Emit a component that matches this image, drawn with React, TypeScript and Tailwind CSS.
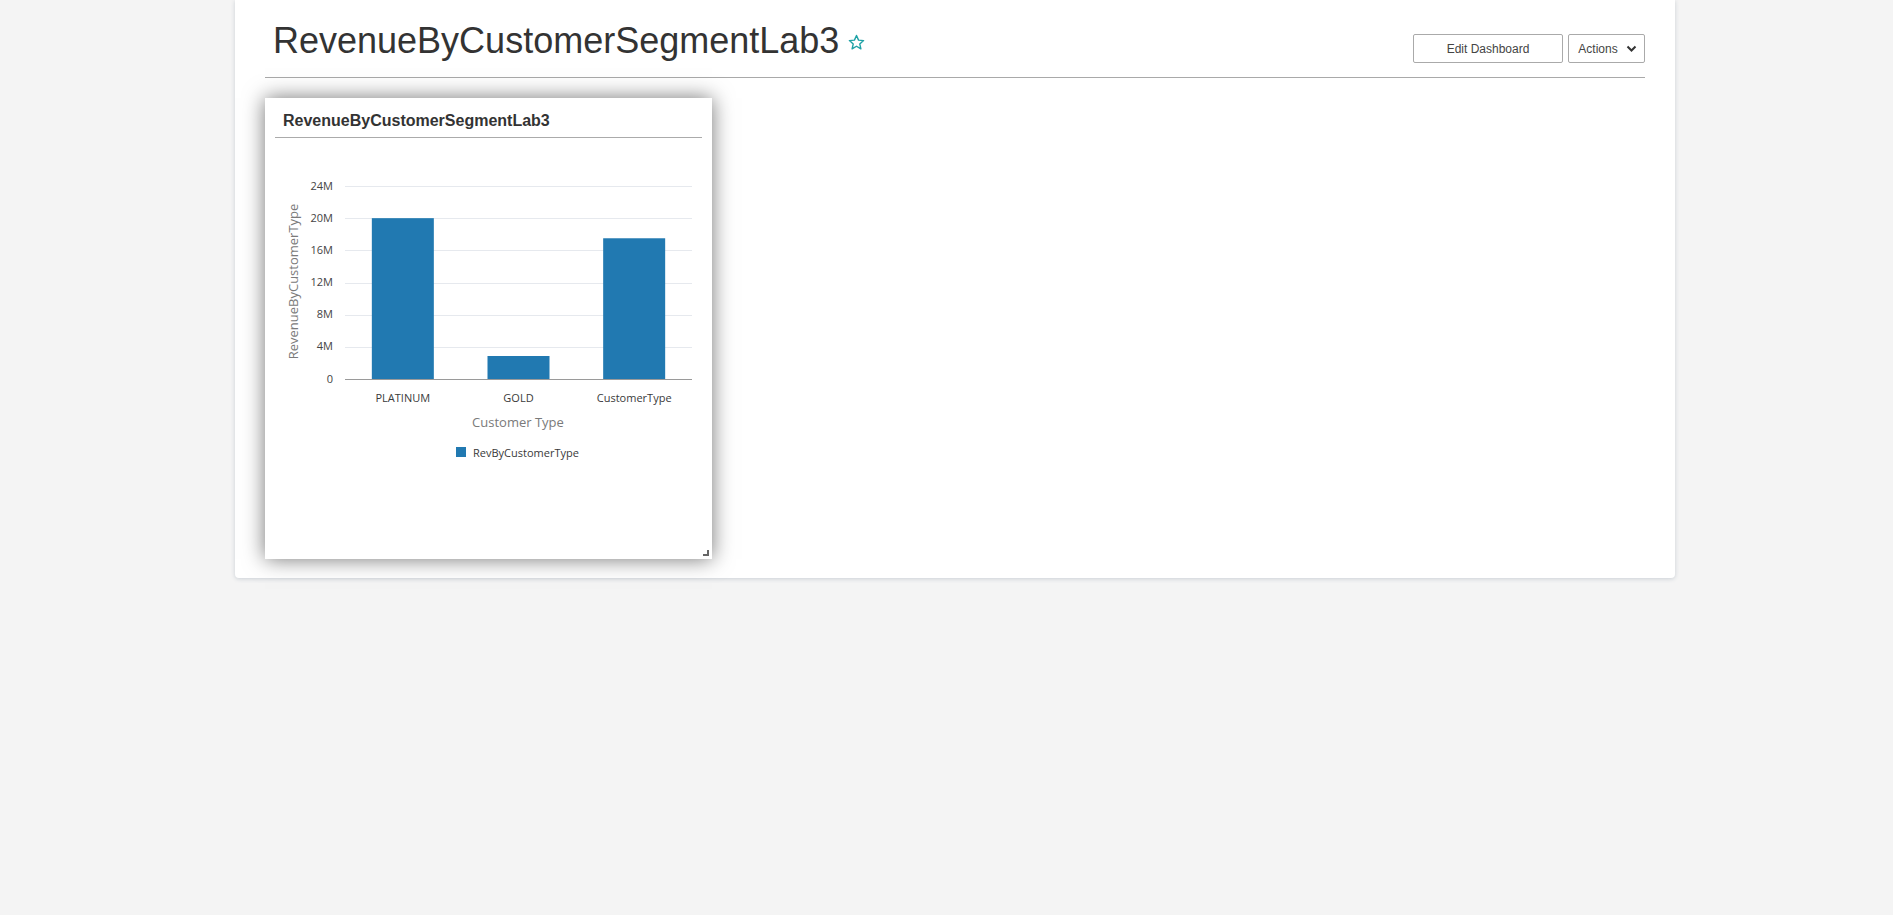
import { memo } from 'react';

const bars = [
  { label: 'PLATINUM', value: 20 },
  { label: 'GOLD', value: 2.86 },
  { label: 'CustomerType', value: 17.5 },
];

const ticks = [0, 4, 8, 12, 16, 20, 24];

// chart geometry (px, relative to the svg)
const base = 241;
const top = 48;
const left = 80;
const right = 427;
const yOf = (v: number) => base - (v / 24) * (base - top);

const Chart = () => {
  const band = (right - left) / bars.length;
  return (
    <svg width="448" height="421" className="block" style={{ fontFamily: '"Open Sans", sans-serif' }}>
      {ticks.map((t) => (
        <g key={t}>
          <line
            x1={left}
            x2={right}
            y1={Math.round(yOf(t)) + 0.5}
            y2={Math.round(yOf(t)) + 0.5}
            stroke={t === 0 ? '#9a9a9a' : '#e6e9ee'}
            strokeWidth="1"
          />
          <text x="68" y={yOf(t) - 1} textAnchor="end" dominantBaseline="central" fontSize="11" fill="#444">
            {t === 0 ? '0' : `${t}M`}
          </text>
        </g>
      ))}
      {bars.map((b, i) => {
        const cx = left + band * i + band / 2;
        const y = yOf(b.value);
        return (
          <g key={b.label}>
            <rect x={cx - 31} y={y} width="62" height={base - y} fill="#2179b1" />
            <text x={cx} y="259" textAnchor="middle" dominantBaseline="central" fontSize="11" fill="#3a3a3a">
              {b.label}
            </text>
          </g>
        );
      })}
      <text x="253" y="284" textAnchor="middle" dominantBaseline="central" fontSize="13" fill="#7a7a7a">
        Customer Type
      </text>
      <text
        x="28"
        y="143.5"
        textAnchor="middle"
        dominantBaseline="central"
        fontSize="13"
        fill="#7a7a7a"
        transform="rotate(-90 28 143.5)"
      >
        RevenueByCustomerType
      </text>
      <rect x="191" y="309" width="10" height="10" fill="#2179b1" />
      <text x="208" y="314" dominantBaseline="central" fontSize="11" fill="#3a3a3a">
        RevByCustomerType
      </text>
    </svg>
  );
};

const Star = () => (
  <svg width="17" height="17" viewBox="0 0 24 24" className="mt-[13px] ml-[9px]">
    <polygon
      points="12,2 14.9,8.6 22,9.3 16.6,14 18.2,21 12,17.3 5.8,21 7.4,14 2,9.3 9.1,8.6"
      fill="none"
      stroke="#1fa2a6"
      strokeWidth="2"
      strokeLinejoin="round"
    />
  </svg>
);

const App = () => {
  return (
    <div className="min-h-[915px] bg-[#f4f4f4]" style={{ fontFamily: '"Liberation Sans", Arial, sans-serif' }}>
      <div className="ml-[235px] w-[1440px] bg-white rounded-b-[4px] shadow-[0_1px_4px_rgba(60,80,110,0.22)] px-[30px] pb-[19px]">
        <div className="flex items-start justify-between h-[78px] border-b border-[#a9a9a9]">
          <div className="flex items-start pl-[8px] pt-[21px]">
            <h1 className="text-[36px] leading-[40px] text-[#333]">RevenueByCustomerSegmentLab3</h1>
            <Star />
          </div>
          <div className="flex gap-[5px] mt-[34px]">
            <button className="w-[150px] h-[29px] border border-[#aaa] rounded-[2px] bg-white text-[12px] text-[#444]">
              Edit Dashboard
            </button>
            <button className="w-[77px] h-[29px] border border-[#aaa] rounded-[2px] bg-white text-[12px] text-[#444] flex items-center justify-center gap-[8px] pl-[2px]">
              Actions
              <svg width="11" height="8" viewBox="0 0 11 8">
                <polyline points="1.5,1.5 5.5,5.5 9.5,1.5" fill="none" stroke="#333" strokeWidth="2" />
              </svg>
            </button>
          </div>
        </div>
        <div className="relative mt-[20px] w-[447px] h-[461px] bg-white shadow-[0_0_20px_rgba(0,0,0,0.55)] flex flex-col">
          <div className="mx-[10px] h-[40px] border-b border-[#ababab] pt-[14px] pl-[8px]">
            <h2 className="text-[16px] leading-[18px] font-bold text-[#333]">RevenueByCustomerSegmentLab3</h2>
          </div>
          <Chart />
          <svg width="6" height="6" viewBox="0 0 6 6" className="absolute right-[3px] bottom-[3px]">
            <path d="M4 0H6V6H0V4H4Z" fill="#666" />
          </svg>
        </div>
      </div>
    </div>
  );
};

export default memo(App);
